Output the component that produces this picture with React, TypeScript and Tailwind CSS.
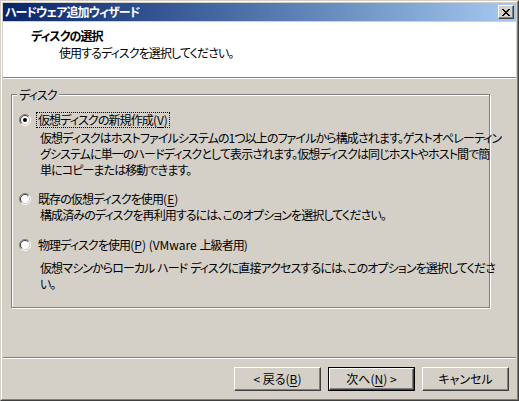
import type { ReactNode } from 'react';

const jp = "font-['Noto_Sans_CJK_JP','Noto_Sans_CJK_SC',sans-serif] [font-feature-settings:'palt']";

function Radio({ checked = false }: { checked?: boolean }) {
  return (
    <svg width="12" height="12" viewBox="0 0 12 12" className="shrink-0" aria-hidden>
      <circle cx="6" cy="6" r="4.5" fill="#fff" />
      <path d="M2.1 9.9A5.5 5.5 0 0 1 9.9 2.1" fill="none" stroke="#808080" />
      <path d="M9.9 2.1A5.5 5.5 0 0 1 2.1 9.9" fill="none" stroke="#fff" />
      <path d="M2.8 9.2A4.5 4.5 0 0 1 9.2 2.8" fill="none" stroke="#404040" />
      <path d="M9.2 2.8A4.5 4.5 0 0 1 2.8 9.2" fill="none" stroke="#d4d0c8" />
      {checked && <circle cx="6" cy="6" r="2" fill="#000" />}
    </svg>
  );
}

// mnemonic letter, e.g. (V)
function Key({ children }: { children: ReactNode }) {
  return (
    <span className="tracking-normal">
      (<span className="underline underline-offset-2">{children}</span>)
    </span>
  );
}

function Button({ children, isDefault = false }: { children: ReactNode; isDefault?: boolean }) {
  return (
    <div className={isDefault ? 'h-[24px] w-[87px] border border-black' : 'h-[24px] w-[87px]'}>
      <div className="flex h-full w-full items-center justify-center border border-t-white border-l-white border-r-[#404040] border-b-[#404040] bg-[#d4d0c8] text-[12px] leading-none tracking-normal text-black shadow-[inset_-1px_-1px_0_#808080]">
        <span className="whitespace-pre">{children}</span>
      </div>
    </div>
  );
}

export default function App() {
  return (
    <div className={`h-[401px] w-[519px] border border-t-[#d4d0c8] border-l-[#d4d0c8] border-r-[#404040] border-b-[#404040] bg-[#d4d0c8] tracking-[-0.9px] ${jp}`}>
      <div className="flex h-full flex-col border border-t-white border-l-white border-r-[#808080] border-b-[#808080] p-px">
        {/* title bar */}
        <div className="flex h-[18px] items-center justify-between bg-gradient-to-r from-[#0a246a] to-[#a6caf0] pl-[2px] pr-[2px]">
          <span className="text-[12px] font-bold leading-none text-white">ハードウェア追加ウィザード</span>
          <span className="flex h-[14px] w-[16px] items-center justify-center border border-t-white border-l-white border-r-[#404040] border-b-[#404040] bg-[#d4d0c8] shadow-[inset_-1px_-1px_0_#808080]">
            <svg width="8" height="7" viewBox="0 0 8 7" aria-hidden>
              <path d="M0 0h2v1h1v1h2V1h1V0h2v1H7v1H6v1H5v1h1v1h1v1h1v1H6V6H5V5H3v1H2v1H0V6h1V5h1V4h1V3H2V2H1V1H0z" fill="#000" />
            </svg>
          </span>
        </div>

        {/* header */}
        <div className="mt-px h-[55px] bg-white pt-[6px] text-[12px] leading-[16px] text-black">
          <p className="pl-[28px] font-bold">ディスクの選択</p>
          <p className="mt-px pl-[56px]">使用するディスクを選択してください。</p>
        </div>
        <div className="h-px bg-[#808080]" />
        <div className="h-px bg-white" />

        {/* body */}
        <div className="flex flex-1 flex-col text-[12px] leading-[16px] text-black">
          <div className="relative ml-[8px] mt-[15px] h-[214px] w-[479px] border border-[#808080] shadow-[inset_1px_1px_0_#fff,1px_1px_0_#fff]">
            <span className="absolute -top-[8px] left-[5px] bg-[#d4d0c8] px-[2px]">ディスク</span>

            <div className="pl-[7px] pt-[17px]">
              <div className="flex h-[16px] items-center gap-[5px]">
                <Radio checked />
                <span className="border border-dotted border-black px-px leading-[14px]">
                  仮想ディスクの新規作成<Key>V</Key>
                </span>
              </div>
              <p className="mt-[2px] whitespace-nowrap pl-[21px]">
                仮想ディスクはホストファイルシステムの1つ以上のファイルから構成されます。ゲストオペレーティン
                <br />
                グシステムに単一のハードディスクとして表示されます。仮想ディスクは同じホストやホスト間で簡
                <br />
                単にコピーまたは移動できます。
              </p>

              <div className="mt-[13px] flex h-[16px] items-center gap-[6px]">
                <Radio />
                <span className="px-px">
                  既存の仮想ディスクを使用<Key>E</Key>
                </span>
              </div>
              <p className="whitespace-nowrap pl-[21px]">構成済みのディスクを再利用するには、このオプションを選択してください。</p>

              <div className="mt-[14px] flex h-[16px] items-center gap-[6px]">
                <Radio />
                <span className="px-px">
                  物理ディスクを使用<Key>P</Key>
                  <span className="tracking-normal"> (VMware </span>上級者用)
                </span>
              </div>
              <p className="mt-[7px] whitespace-nowrap pl-[21px]">
                仮想マシンからローカル<span className="tracking-normal"> </span>ハード<span className="tracking-normal"> </span>ディスクに直接アクセスするには、このオプションを選択してくださ
                <br />
                い。
              </p>
            </div>
          </div>

          <div className="flex-1" />
          <div className="h-px bg-[#808080]" />
          <div className="h-px bg-white" />

          <div className="mb-[7px] mt-[8px] flex justify-end gap-[7px] pr-[7px]">
            <Button>
              {'< 戻る'}
              <Key>B</Key>
            </Button>
            <Button isDefault>
              次へ<Key>N</Key>
              {' >'}
            </Button>
            <Button>キャンセル</Button>
          </div>
        </div>
      </div>
    </div>
  );
}
